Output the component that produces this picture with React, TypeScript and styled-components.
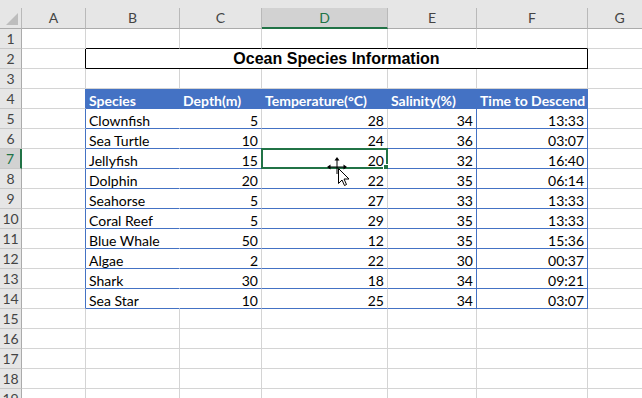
import React from "react";
import styled, { createGlobalStyle } from "styled-components";

const GREEN = "#217346";
const BLUE = "#4472C4";
const GRID = "#d4d4d4";
const HEAD_BG = "#e6e6e6";
const HEAD_LINE = "#b9b9b9";

const columns = ["A", "B", "C", "D", "E", "F", "G"];

const species: [string, number, number, number, string][] = [
  ["Clownfish", 5, 28, 34, "13:33"],
  ["Sea Turtle", 10, 24, 36, "03:07"],
  ["Jellyfish", 15, 20, 32, "16:40"],
  ["Dolphin", 20, 22, 35, "06:14"],
  ["Seahorse", 5, 27, 33, "13:33"],
  ["Coral Reef", 5, 29, 35, "13:33"],
  ["Blue Whale", 50, 12, 35, "15:36"],
  ["Algae", 2, 22, 30, "00:37"],
  ["Shark", 30, 18, 34, "09:21"],
  ["Sea Star", 10, 25, 34, "03:07"],
];

const headers = ["Species", "Depth(m)", "Temperature(°C)", "Salinity(%)", "Time to Descend"];

const GlobalStyle = createGlobalStyle`
  html, body {
    margin: 0;
    padding: 0;
    background: #fff;
    overflow: hidden;
  }
  body {
    font-family: Lato, "Liberation Sans", sans-serif;
  }
`;

const Sheet = styled.div`
  position: relative;
  width: 642px;
  height: 398px;
  overflow: hidden;
  background: #fff;
`;

const TopStrip = styled.div`
  height: 8px;
  background: ${HEAD_BG};
`;

const Row = styled.div`
  display: grid;
  grid-template-columns: 22px 64px 94px 82px 126px 89px 111px 64px;
  width: 652px;
`;

const Corner = styled.div`
  position: relative;
  height: 21px;
  box-sizing: border-box;
  background: ${HEAD_BG};
  border-right: 1px solid ${HEAD_LINE};
  border-bottom: 1px solid #ababab;

  &::after {
    content: "";
    position: absolute;
    right: 3px;
    bottom: 3px;
    width: 0;
    height: 0;
    border-left: 12px solid transparent;
    border-bottom: 12px solid #bdbdbd;
  }
`;

const ColHead = styled.div<{ $active?: boolean }>`
  height: 21px;
  box-sizing: border-box;
  background: ${(p) => (p.$active ? "#d2d2d2" : HEAD_BG)};
  border-right: 1px solid ${HEAD_LINE};
  border-bottom: ${(p) => (p.$active ? `2px solid ${GREEN}` : "1px solid #ababab")};
  color: ${(p) => (p.$active ? GREEN : "#444")};
  font-size: 14px;
  line-height: 20px;
  text-align: center;
`;

const RowHead = styled.div<{ $active?: boolean }>`
  height: 20px;
  box-sizing: border-box;
  background: ${(p) => (p.$active ? "#d2d2d2" : HEAD_BG)};
  border-right: ${(p) => (p.$active ? `2px solid ${GREEN}` : `1px solid #ababab`)};
  border-bottom: 1px solid #c8c8c8;
  color: ${(p) => (p.$active ? GREEN : "#444")};
  font-size: 14px;
  line-height: 20px;
  text-align: center;
`;

const Cell = styled.div<{
  $bottom?: string;
  $right?: string;
  $fill?: string;
  $align?: "left" | "right";
  $bold?: boolean;
  $color?: string;
}>`
  position: relative;
  height: 20px;
  box-sizing: border-box;
  padding: 2px 3px 0;
  background: ${(p) => p.$fill || "#fff"};
  border-right: 1px solid ${(p) => p.$right || GRID};
  border-bottom: 1px solid ${(p) => p.$bottom || GRID};
  color: ${(p) => p.$color || "#000"};
  font-size: 14px;
  font-weight: ${(p) => (p.$bold ? 700 : 400)};
  line-height: 19px;
  text-align: ${(p) => p.$align || "left"};
  white-space: nowrap;
  overflow: visible;
`;

const Title = styled.div`
  grid-column: span 5;
  height: 20px;
  box-sizing: border-box;
  border-right: 1px solid #000;
  border-bottom: 1px solid #000;
  font-family: "Liberation Sans", Arial, sans-serif;
  font-size: 16px;
  font-weight: 700;
  line-height: 19px;
  text-align: center;
  color: #000;
`;

const Selection = styled.div`
  position: absolute;
  left: -1px;
  top: -1px;
  right: -1px;
  bottom: -1px;
  border: 2px solid ${GREEN};
  pointer-events: none;
`;

const Handle = styled.div`
  position: absolute;
  right: -4px;
  bottom: -4px;
  width: 5px;
  height: 5px;
  background: ${GREEN};
  border: 1px solid #fff;
`;

const Cursor = styled.svg`
  position: absolute;
  left: 324px;
  top: 156px;
  width: 30px;
  height: 32px;
  pointer-events: none;
`;

const MoveCursor = () => (
  <Cursor viewBox="0 0 30 32">
    <path d="M13 3 L13 18 M5 11 L21 11" stroke="#000" strokeWidth="1" fill="none" />
    <path d="M13 1 L10.5 4.5 L15.5 4.5 Z" fill="#000" />
    <path d="M3 11 L6.5 8.5 L6.5 13.5 Z" fill="#000" />
    <path d="M23 11 L19.5 8.5 L19.5 13.5 Z" fill="#000" />
    <path
      d="M14.5 12.5 L14.5 27.5 L18 24 L20.5 29.5 L22.5 28.5 L20 23 L25 23 Z"
      fill="#fff"
      stroke="#000"
      strokeWidth="1"
      strokeLinejoin="miter"
    />
  </Cursor>
);

const EmptyRow = ({ n, bottom }: { n: number; bottom?: string }) => (
  <Row>
    <RowHead>{n}</RowHead>
    <Cell />
    {[0, 1, 2, 3, 4].map((i) => (
      <Cell key={i} $bottom={bottom} />
    ))}
    <Cell />
  </Row>
);

export default function App() {
  return (
    <>
      <GlobalStyle />
      <Sheet>
        <TopStrip />
        <Row>
          <Corner />
          {columns.map((c) => (
            <ColHead key={c} $active={c === "D"}>
              {c}
            </ColHead>
          ))}
        </Row>

        <EmptyRow n={1} bottom="#000" />

        <Row>
          <RowHead>2</RowHead>
          <Cell $right="#000" />
          <Title>Ocean Species Information</Title>
          <Cell />
        </Row>

        <EmptyRow n={3} />

        <Row>
          <RowHead>4</RowHead>
          <Cell $right={BLUE} />
          {headers.map((h) => (
            <Cell key={h} $fill={BLUE} $right={BLUE} $bottom={BLUE} $bold $color="#fff">
              {h}
            </Cell>
          ))}
          <Cell />
        </Row>

        {species.map(([name, depth, temp, sal, time], i) => {
          const n = i + 5;
          const selected = n === 7;
          return (
            <Row key={name}>
              <RowHead $active={selected}>{n}</RowHead>
              <Cell $right={BLUE} />
              <Cell $bottom={BLUE} $right="#fff">
                {name}
              </Cell>
              <Cell $bottom={BLUE} $align="right">
                {depth}
              </Cell>
              <Cell $bottom={BLUE} $align="right">
                {temp}
                {selected && (
                  <Selection>
                    <Handle />
                  </Selection>
                )}
              </Cell>
              <Cell $bottom={BLUE} $right={BLUE} $align="right">
                {sal}
              </Cell>
              <Cell $bottom={BLUE} $right={BLUE} $align="right">
                {time}
              </Cell>
              <Cell />
            </Row>
          );
        })}

        {[15, 16, 17, 18, 19].map((n) => (
          <EmptyRow key={n} n={n} />
        ))}

        <MoveCursor />
      </Sheet>
    </>
  );
}
